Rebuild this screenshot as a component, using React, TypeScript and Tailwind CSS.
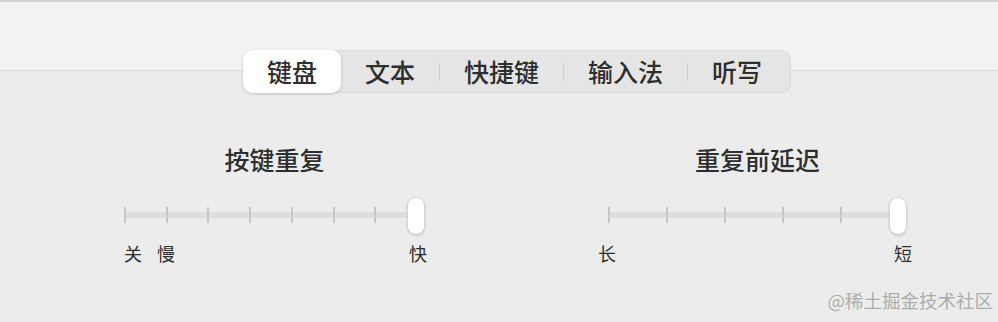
import React from "react";

const FONT = { fontFamily: '"Noto Sans CJK SC", "Noto Sans", sans-serif' };

function Slider({ count, width }: { count: number; width: number }) {
  const trackW = width - 9;
  const step = trackW / (count - 1);
  return (
    <div className="relative h-[40px]" style={{ width }}>
      <div className="absolute left-0 top-[15px] h-[6px] bg-[#dedede]" style={{ width: trackW }} />
      {Array.from({ length: count - 1 }).map((_, i) => (
        <div
          key={i}
          className="absolute top-[10px] h-[16px] w-[2px] bg-[#c6c6c6]"
          style={{ left: Math.round(i * step) }}
        />
      ))}
      <div className="absolute right-0 top-0 h-[38px] w-[18px] rounded-full bg-white border border-[#d6d6d6] shadow-[0_1px_2px_rgba(0,0,0,0.18)]" />
    </div>
  );
}

export default function App() {
  const tabs = ["键盘", "文本", "快捷键", "输入法", "听写"];
  return (
    <div className="relative h-[322px] w-[998px] overflow-hidden bg-[#ececec] text-[#2e2e2e]" style={FONT}>
      <div className="h-[71px] border-t-2 border-[#d2d2d2] border-b border-b-[#dadada] bg-[#f3f3f3]" />
      <div className="flex pl-[243px] -mt-[21px]">
        <div className="flex h-[43px] items-center rounded-[9px] border border-[#dadada] bg-[#e5e5e5] pr-[4px]">
          {tabs.map((t, i) => (
            <React.Fragment key={t}>
              {i > 1 && <div className="h-[18px] w-px bg-[#cfcfcf]" />}
              <div
                className={
                  i === 0
                    ? "flex h-[43px] items-center rounded-[9px] bg-white px-[24px] text-[25px] font-medium leading-none shadow-[0_1px_3px_rgba(0,0,0,0.2)] -ml-px"
                    : "flex h-[43px] items-center px-[24px] text-[25px] font-medium leading-none"
                }
              >
                {t}
              </div>
            </React.Fragment>
          ))}
        </div>
      </div>
      <div className="flex mt-[52px] pl-[124px] gap-[183px]">
        <div className="flex w-[301px] flex-col">
          <div className="text-center text-[25px] font-medium leading-[28px]">按键重复</div>
          <div className="mt-[24px]">
            <Slider count={8} width={301} />
          </div>
          <div className="mt-[5px] flex text-[18px] leading-[22px]">
            <span>关</span>
            <span className="ml-[15px]">慢</span>
            <span className="flex-1" />
            <span className="-mr-[2px]">快</span>
          </div>
        </div>
        <div className="flex w-[299px] flex-col">
          <div className="text-center text-[25px] font-medium leading-[28px]">重复前延迟</div>
          <div className="mt-[24px]">
            <Slider count={6} width={299} />
          </div>
          <div className="mt-[5px] flex text-[18px] leading-[22px]">
            <span className="-ml-[10px]">长</span>
            <span className="flex-1" />
            <span className="-mr-[5px]">短</span>
          </div>
        </div>
      </div>
      <div className="absolute right-[5px] bottom-[11px] text-[18.5px] leading-[22px] text-[#adadad]">
        @稀土掘金技术社区
      </div>
    </div>
  );
}
